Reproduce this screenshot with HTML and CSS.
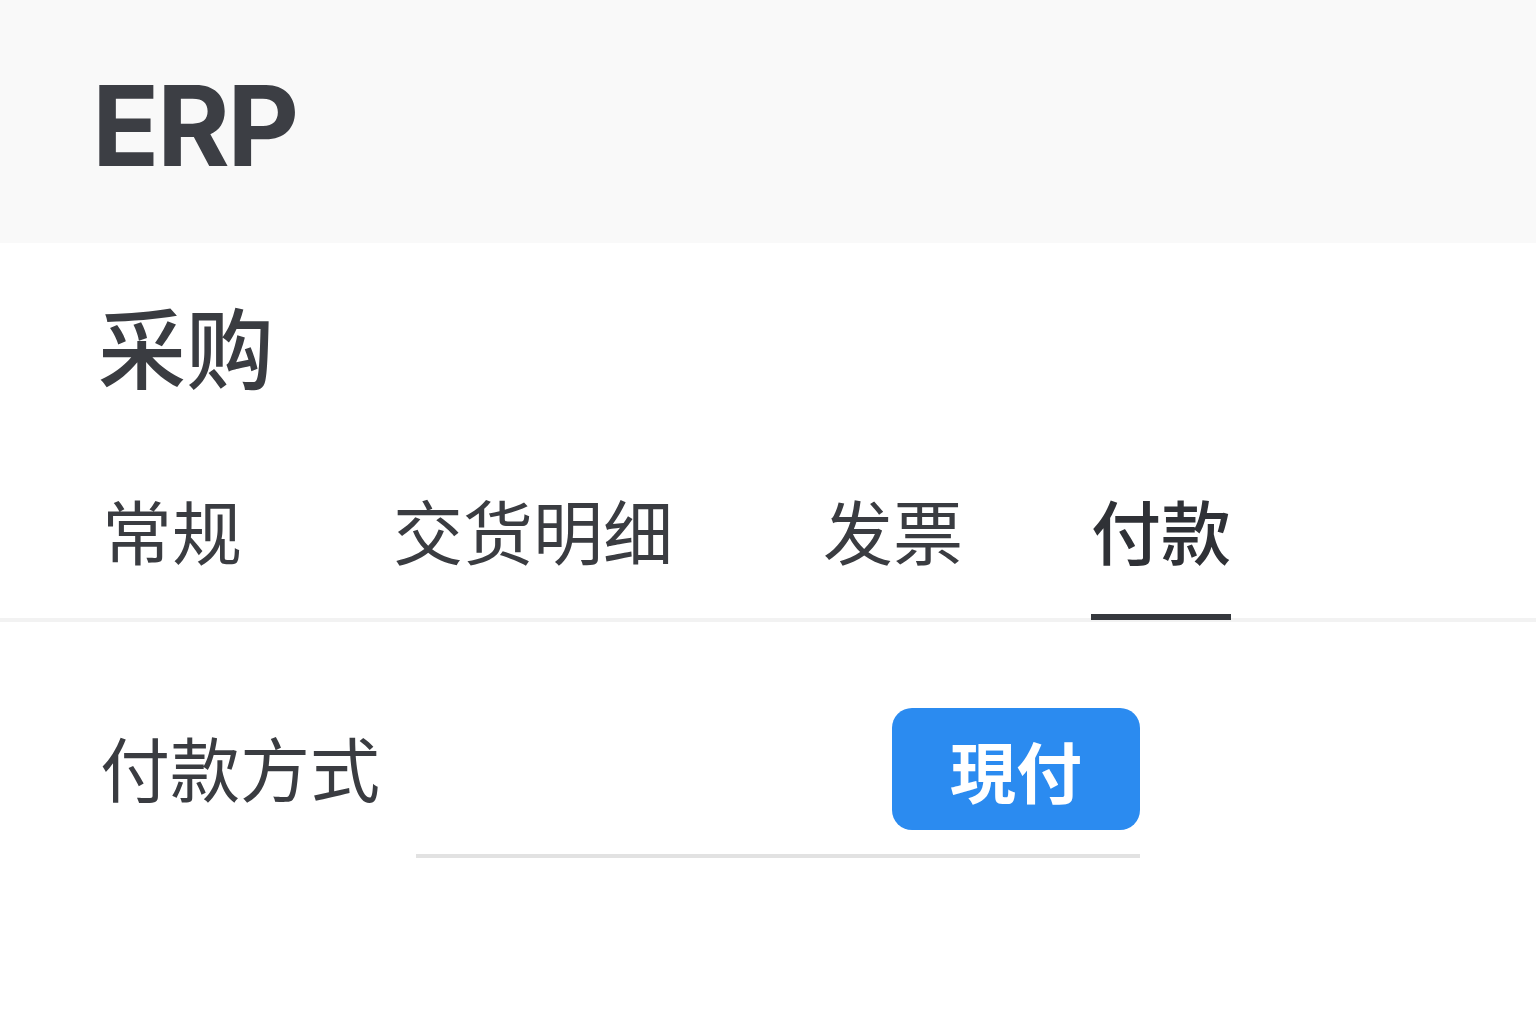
FILE: index.html
```html
<!DOCTYPE html>
<html lang="zh-CN">
<head>
  <meta charset="UTF-8">
  <meta name="viewport" content="width=device-width, initial-scale=1.0">
  <title>ERP 采购</title>
  <link rel="stylesheet" href="styles.css">
</head>
<body>
  <header class="app-header">
    <div class="brand">ERP</div>
  </header>

  <main class="page">
    <h1 class="page-title">采购</h1>

    <nav class="tabs">
      <button class="tab">常规</button>
      <button class="tab">交货明细</button>
      <button class="tab">发票</button>
      <button class="tab active">付款</button>
    </nav>

    <!-- Payment tab -->
    <section class="form">
      <div class="form-row">
        <label class="form-label">付款方式</label>
        <div class="form-field">
          <button class="chip">現付</button>
        </div>
      </div>
    </section>
  </main>
</body>
</html>
```

FILE: styles.css
```css
body {
  margin: 0;
  padding: 0;
  background-color: #ffffff;
  font-family: "Noto Sans CJK SC", "Noto Sans", sans-serif;
  color: #3a3c41;
}
.app-header {
  height: 243px;
  background-color: #f9f9f9;
  display: flex;
  align-items: center;
  padding-left: 92px;
}
.brand {
  font-family: Inter, "Noto Sans", sans-serif;
  font-weight: 700;
  font-size: 111px;
  line-height: 1;
  color: #3c3e44;
  letter-spacing: -2.5px;
  margin-top: 8px;
}
.page-title {
  margin: 0;
  padding: 48px 0 0 98px;
  font-size: 88px;
  line-height: 1.2;
  font-weight: 500;
  color: #3a3c41;
}
.tabs {
  display: flex;
  margin-top: 91px;
  padding-left: 102px;
  border-bottom: 4px solid #f2f2f2;
}
.tab {
  background: none;
  border: none;
  padding: 0 0 46px;
  margin-right: 151px;
  font-family: "Noto Sans CJK SC", sans-serif;
  font-size: 70px;
  line-height: 1.2;
  font-weight: 400;
  color: #3a3c41;
  position: relative;
  cursor: pointer;
}
.tab:nth-child(2) {
  margin-right: 150px;
}
.tab:nth-child(3) {
  margin-right: 128px;
}
.tab.active {
  color: #2f3136;
  font-weight: 500;
}
.tab.active::after {
  content: "";
  position: absolute;
  left: 0;
  right: 0;
  bottom: -2px;
  height: 6px;
  background-color: #35383d;
}
.form {
  padding: 62px 0 0 100px;
}
.form-row {
  display: flex;
  align-items: center;
}
.form-label {
  width: 316px;
  font-size: 70px;
  line-height: 1;
  color: #3a3c41;
  padding-bottom: 8px;
}
.form-field {
  width: 724px;
  display: flex;
  justify-content: flex-end;
  padding-bottom: 24px;
  border-bottom: 4px solid #e2e2e2;
  margin-top: 24px;
}
.chip {
  width: 248px;
  height: 122px;
  border: none;
  border-radius: 20px;
  background-color: #2b8bf0;
  color: #ffffff;
  font-family: "Noto Sans CJK JP", "Noto Sans CJK TC", sans-serif;
  font-size: 66px;
  font-weight: 700;
  line-height: 1;
  cursor: pointer;
}
```
